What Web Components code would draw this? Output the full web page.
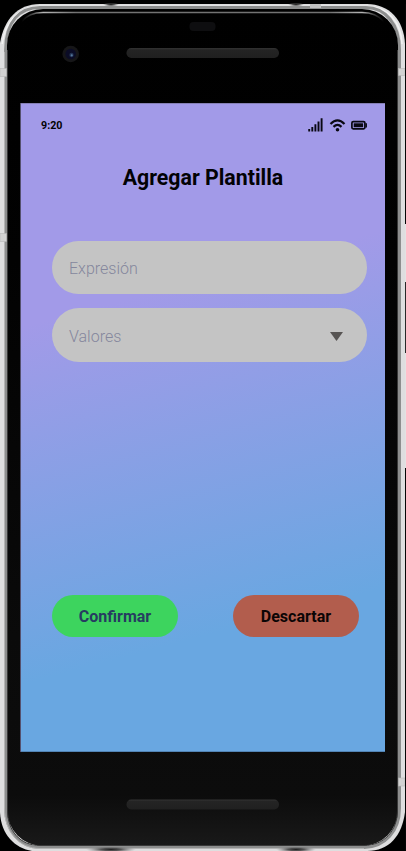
<!DOCTYPE html>
<html lang="es">
<head>
<meta charset="utf-8">
<title>Agregar Plantilla</title>
<style>
html,body{margin:0;background:#000;overflow:hidden}
body{font-family:Roboto,"Liberation Sans",sans-serif;color:#020204}
</style>
</head>
<body>
<phone-frame>
  <app-screen heading="Agregar Plantilla">
    <status-bar slot="status">9:20</status-bar>
    <form-field>Expresión</form-field>
    <form-field dropdown>Valores</form-field>
    <pill-button slot="actions">Confirmar</pill-button>
    <pill-button slot="actions" danger>Descartar</pill-button>
  </app-screen>
</phone-frame>
<script>
function define(name, html) {
  const t = document.createElement('template');
  t.innerHTML = html;
  customElements.define(name, class extends HTMLElement {
    constructor() {
      super();
      this.attachShadow({mode: 'open'}).appendChild(t.content.cloneNode(true));
    }
    connectedCallback() {
      const h = this.shadowRoot.querySelector('h1');
      if (h) h.textContent = this.getAttribute('heading');
    }
  });
}

define('phone-frame', `
<style>
:host{display:grid;position:relative;width:406px;height:851px;grid-template-columns:21px 364px 21px;grid-template-rows:103px 649px 99px;overflow:hidden}
svg{position:absolute;inset:0}
::slotted(*){grid-column:2;grid-row:2;position:relative}
</style>
<svg width="406" height="851" viewBox="0 0 406 851">
  <defs>
    <linearGradient id="face" x1="0" y1="0" x2="0" y2="1"><stop offset="0" stop-color="#000"/><stop offset=".3" stop-color="#020202"/><stop offset=".75" stop-color="#0a0a0a"/><stop offset=".94" stop-color="#0c0c0c"/><stop offset="1" stop-color="#191919"/></linearGradient>
    <linearGradient id="spk" x1="0" y1="0" x2="0" y2="1"><stop offset="0" stop-color="#333"/><stop offset=".2" stop-color="#242424"/><stop offset="1" stop-color="#202020"/></linearGradient>
    <linearGradient id="arc"><stop offset="0" stop-color="#777" stop-opacity="0"/><stop offset=".06" stop-color="#b5b5b5"/><stop offset=".15" stop-color="#737373"/><stop offset=".85" stop-color="#737373"/><stop offset=".94" stop-color="#b5b5b5"/><stop offset="1" stop-color="#777" stop-opacity="0"/></linearGradient>
    <radialGradient id="dark"><stop offset="0" stop-color="#222"/><stop offset=".4" stop-color="#333" stop-opacity=".8"/><stop offset="1" stop-color="#777" stop-opacity="0"/></radialGradient>
  </defs>
  <path d="M0 43C4 20 17 4 40 4H367C389 4 404 20 405 44V812C402 836 389 851 367 851H32C15 848 1 835 0 812Z" fill="#dededf"/>
  <path d="M2.2 44C5 20 20 6.5 40 6.5H367C387 6.500 401 21 402 44" fill="none" stroke="#f2f2f2" stroke-width="1.5"/>
  <path d="M5.600 50C5.600 21 20 7.500 40 7.500H366C385 7.500 399.500 24 399.500 50V808C399.500 831 385 847.500 364 847.500H40C20 847.500 5.600 831 5.600 808Z" fill="none" stroke="#8d8e8e" stroke-width="3"/>
  <path d="M4.500 52V808C4.500 832 19 848.500 40 848.500H364" fill="none" stroke="#b4b4b4"/>
  <rect x="7" y="9" width="391" height="837" rx="36" fill="url(#face)"/>
  <path d="M7.500 50V810C7.500 831 20 845.500 40 845.500H364C384 845.500 397.500 831 397.500 810V50" fill="none" stroke="#393939"/>
  <path d="M21.500 21.500Q29 12.600 43 12.500H362Q376 12.600 384 21.500" fill="none" stroke="url(#arc)" stroke-width="1.400"/>
  <ellipse cx="111" cy="4.500" rx="8" ry="2" fill="url(#dark)"/>
  <ellipse cx="296" cy="4.500" rx="8" ry="2" fill="url(#dark)"/>
  <ellipse cx="111" cy="849.500" rx="25" ry="3" fill="url(#dark)"/>
  <ellipse cx="296" cy="849.500" rx="20" ry="3" fill="url(#dark)"/>
  <rect x="310" y="4" width="11" height="4" fill="#c0c0c0"/>
  <g fill="#d2d2d2" stroke="#b8b8b8" stroke-width=".6">
    <rect x="0" y="68.500" width="6.500" height="8"/><rect x="0" y="233.500" width="6.500" height="8"/>
    <rect x="398.500" y="68.500" width="6.500" height="7"/><rect x="398.500" y="778" width="6.500" height="8"/>
  </g>
  <path d="M405.500 4V224M405.500 468V851" stroke="#050505"/>
  <path d="M405.500 224V282M405.500 353V468" stroke="#e2e2e2"/>
  <path d="M405.500 282V353" stroke="#282828"/>
  <rect x="189.500" y="22" width="26" height="9" rx="4" fill="#0e0e10"/>
  <rect x="126.500" y="48" width="152.500" height="10" rx="4.800" fill="url(#spk)"/>
  <rect x="126.500" y="799.500" width="152.500" height="10" rx="4.800" fill="url(#spk)"/>
  <circle cx="70.700" cy="54" r="8.300" fill="#161618"/><circle cx="70.700" cy="54" r="5.300" fill="#0b0c26"/><circle cx="71.500" cy="55" r="2.200" fill="#223250"/><circle cx="71.700" cy="55.300" r="1.100" fill="#56789e"/>
  <path d="M20.500 103V752" stroke="#55516e"/>
</svg>
<slot></slot>`);

define('app-screen', `
<style>
:host{display:flex;flex-direction:column;box-sizing:border-box;height:649px;background:linear-gradient(165deg,#a29ae8 30%,#69a7e1 78%);box-shadow:inset 0 1px #8580b5,inset 0 -1px #5284b5}
h1{margin:31px 0 0;font:700 21.300px/25px Roboto,sans-serif;text-align:center}
.fields{display:flex;flex-direction:column;gap:14px;margin:50.500px 18px 0 31.300px}
.actions{display:flex;justify-content:space-between;margin:auto 26.300px 115px 31.300px}
</style>
<slot name="status"></slot>
<h1></h1>
<div class="fields"><slot></slot></div>
<div class="actions"><slot name="actions"></slot></div>`);

define('status-bar', `
<style>
:host{display:flex;justify-content:space-between;align-items:center;height:16px;padding:15px 18px 0 20px;font:700 10.700px/16px Roboto,sans-serif}
svg{display:block}
</style>
<span><slot></slot></span>
<svg width="60" height="16" viewBox="0 0 60 16" fill="none" stroke="#090812">
  <path d="M2.200 11V13.500M5.300 9V13.500M8.400 6.200V13.500M11.500 3.500V13.500M14.600 .3V13.500" stroke-width="1.900"/>
  <path d="M23.500 6Q30.500 -1 37.500 6M26.500 8.900Q30.500 5 34.500 8.900" stroke-width="2.200"/>
  <circle cx="30.500" cy="11.700" r="1.800" fill="#090812" stroke="none"/>
  <rect x="44.900" y="3.600" width="13" height="7.300" rx="1.300" stroke-width="1.700"/>
  <rect x="46.700" y="5.300" width="9.400" height="3.900" fill="#090812" stroke="none"/>
  <path d="M59.200 5.200V9.400" stroke-width="1.500"/>
</svg>`);

define('form-field', `
<style>
:host{display:flex;align-items:center;justify-content:space-between;box-sizing:border-box;height:53.500px;border-radius:27px;background:#c4c4c4;padding:3.500px 24px 0 16.700px;font:300 16px/20px Roboto,sans-serif;color:#85879d}
svg{display:none}
:host([dropdown]) svg{display:block}
</style>
<span><slot></slot></span>
<svg width="13" height="9" viewBox="0 0 13 9"><path d="M0 0H13L6.500 9Z" fill="#575453"/></svg>`);

define('pill-button', `
<style>
:host{display:flex;align-items:center;justify-content:center;box-sizing:border-box;width:125.500px;height:42px;padding-top:2px;border-radius:21px;background:#3dd45e;color:#263c61;font:700 16px/20px Roboto,sans-serif}
:host([danger]){background:#b25d4d;color:#0b0505}
</style>
<span><slot></slot></span>`);
</script>
</body>
</html>
